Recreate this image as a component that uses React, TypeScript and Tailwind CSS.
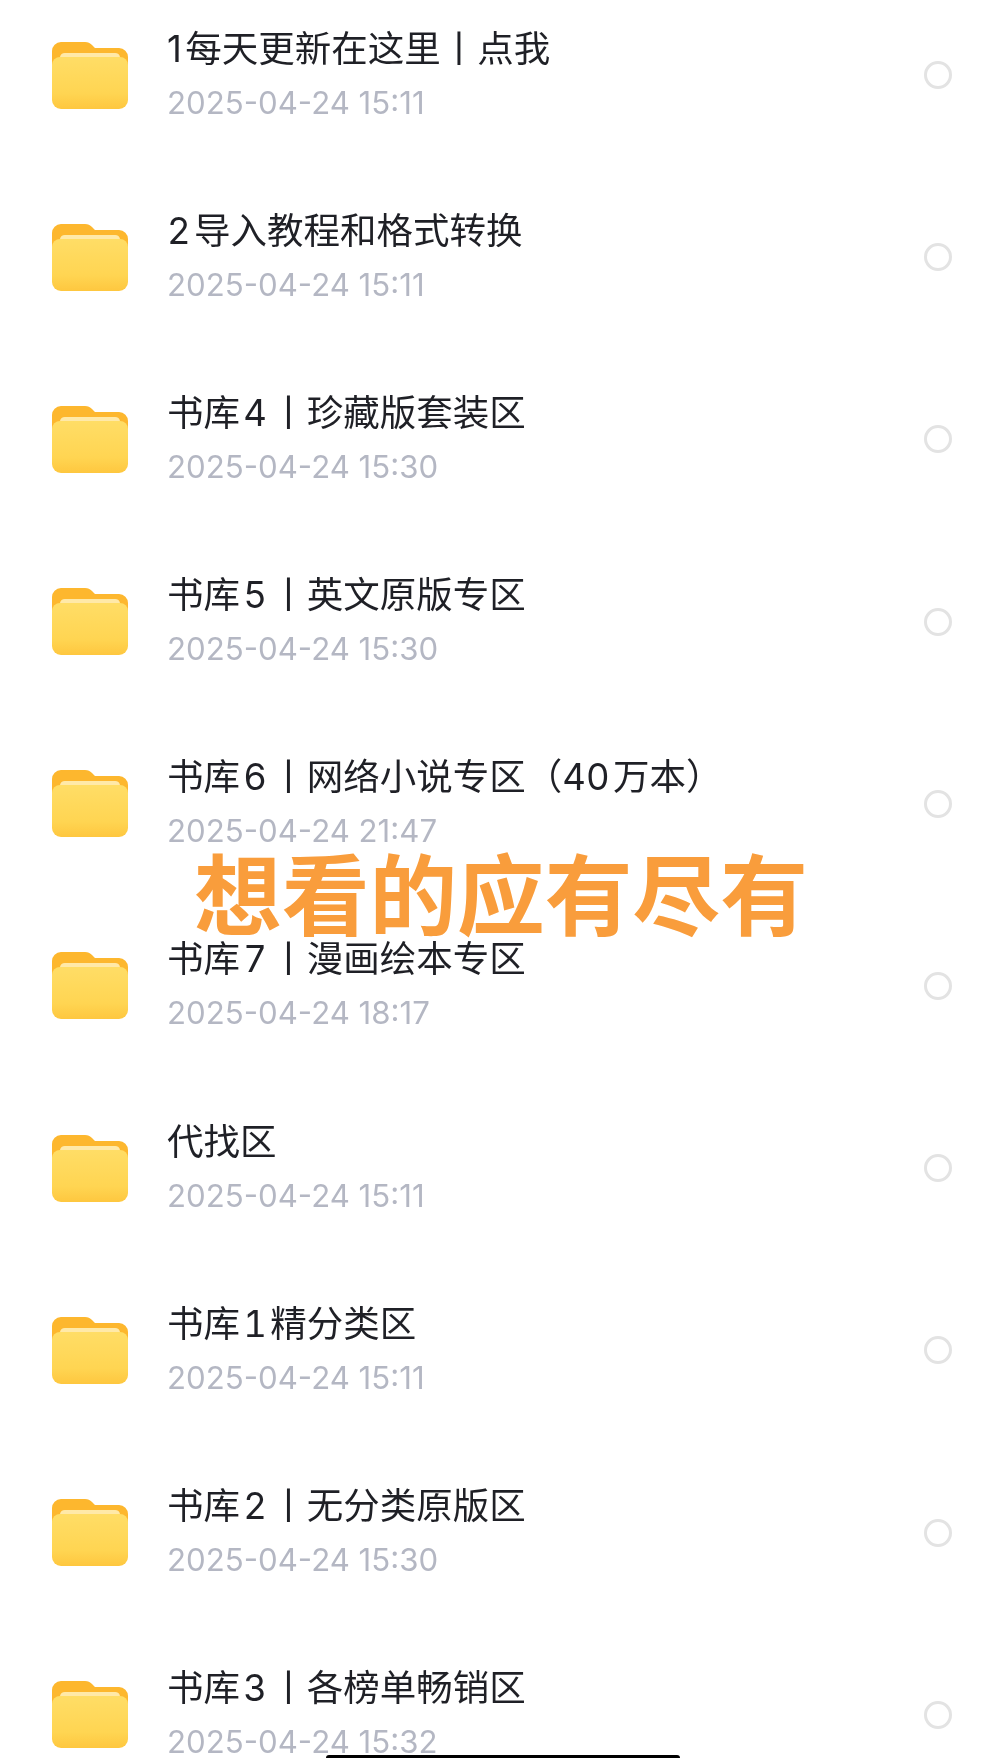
const files = [
   { name: "1\u200a每天更新在这里丨点我", time: "2025-04-24 15:11" },
   { name: "2\u200a导入教程和格式转换", time: "2025-04-24 15:11" },
   { name: "书库\u200a4\u200a丨珍藏版套装区", time: "2025-04-24 15:30" },
   { name: "书库\u200a5\u200a丨英文原版专区", time: "2025-04-24 15:30" },
   { name: "书库\u200a6\u200a丨网络小说专区（40\u200a万本）", time: "2025-04-24 21:47" },
   { name: "书库\u200a7\u200a丨漫画绘本专区", time: "2025-04-24 18:17" },
   { name: "代找区", time: "2025-04-24 15:11" },
   { name: "书库\u200a1\u200a精分类区", time: "2025-04-24 15:11" },
   { name: "书库\u200a2\u200a丨无分类原版区", time: "2025-04-24 15:30" },
   { name: "书库\u200a3\u200a丨各榜单畅销区", time: "2025-04-24 15:32" },
];

const FolderIcon = ({ id }: { id: number }) => (
   <svg width="76" height="67" viewBox="0 0 76 67" className="shrink-0">
      <defs>
         <linearGradient id={`front-${id}`} x1="0" y1="0" x2="0" y2="1">
            <stop offset="0" stopColor="#ffdd66" />
            <stop offset="0.7" stopColor="#ffd552" />
            <stop offset="1" stopColor="#fec73f" />
         </linearGradient>
      </defs>
      <path
         d="M0 9a9 9 0 0 1 9-9h24c3 0 5 1 7 3l3 3h24a9 9 0 0 1 9 9v20H0z"
         fill="#fdb72e"
      />
      <path d="M8 15a5 5 0 0 1 5-4h50a5 5 0 0 1 5 4v6H8z" fill="#ffe9a8" />
      <path
         d="M0 23a8 8 0 0 1 8-8h60a8 8 0 0 1 8 8v35a9 9 0 0 1-9 9H9a9 9 0 0 1-9-9z"
         fill={`url(#front-${id})`}
      />
   </svg>
);

const App = () => {
   return (
      <section className="relative h-[1758px] w-[1000px] overflow-hidden bg-white font-['Inter','Noto_Sans_CJK_SC',sans-serif] blur-[0.5px]">
         <div className="flex flex-col gap-[84.2px] pt-[26px]">
            {files.map((file, i) => (
               <div key={file.name} className="flex h-[98px] items-center pl-[52px] pr-[48px]">
                  <FolderIcon id={i} />
                  <div className="ml-[39px] flex-1">
                     <p className={`text-[36.5px] leading-[46px] text-[#1f2026] ${i === 0 ? "" : "tabular-nums"}`}>
                        {file.name}
                     </p>
                     <p className="mt-[9px] text-[31.2px] leading-[44px] text-[#b4b7c3]">{file.time}</p>
                  </div>
                  <div className="size-7 rounded-full border-[3px] border-[#e3e3e3]" />
               </div>
            ))}
         </div>

         <div className="absolute left-[194px] top-[840px] text-[87.7px] font-bold leading-[112px] text-[#f99d3c]">
            想看的应有尽有
         </div>
         <div className="absolute bottom-0 left-[326px] h-[3px] w-[354px] rounded-t-full bg-black" />
      </section>
   );
};

export default App;
